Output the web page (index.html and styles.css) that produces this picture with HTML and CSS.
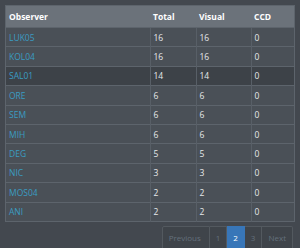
FILE: index.html
```html
<!DOCTYPE html>
<html>
<head>
<meta charset="utf-8">
<link rel="stylesheet" href="styles.css">
</head>
<body>
<div class="wrap">
<table class="obs">
<thead>
<tr><th class="c1">Observer</th><th class="c2">Total</th><th class="c3">Visual</th><th class="c4">CCD</th></tr>
</thead>
<tbody>
<tr><td><a>LUK05</a></td><td>16</td><td>16</td><td>0</td></tr>
<tr><td><a>KOL04</a></td><td>16</td><td>16</td><td>0</td></tr>
<tr class="hover"><td><a>SAL01</a></td><td>14</td><td>14</td><td>0</td></tr>
<tr><td><a>ORE</a></td><td>6</td><td>6</td><td>0</td></tr>
<tr><td><a>SEM</a></td><td>6</td><td>6</td><td>0</td></tr>
<tr><td><a>MIH</a></td><td>6</td><td>6</td><td>0</td></tr>
<tr><td><a>DEG</a></td><td>5</td><td>5</td><td>0</td></tr>
<tr><td><a>NIC</a></td><td>3</td><td>3</td><td>0</td></tr>
<tr><td><a>MOS04</a></td><td>2</td><td>2</td><td>0</td></tr>
<tr><td><a>ANI</a></td><td>2</td><td>2</td><td>0</td></tr>
</tbody>
</table>
<ul class="pager">
<li class="pg prev">Previous</li>
<li class="pg">1</li>
<li class="pg active">2</li>
<li class="pg">3</li>
<li class="pg next">Next</li>
</ul>
</div>
</body>
</html>
```
FILE: styles.css
```css
html, body { margin: 0; padding: 0; background: #43484f; }
body { font-family: "Open Sans", "DejaVu Sans", sans-serif; font-size: 8.5px; color: #e6e8ea; width: 300px; height: 248px; overflow: hidden; }
.wrap { padding: 5px 7px 0 5px; }
.obs { width: 288px; border-collapse: collapse; table-layout: fixed; background: #4a5057; border: 1px solid #5d646c; }
.obs th { background: #6b727a; color: #ffffff; font-weight: 700; text-align: left; height: 21px; padding: 0 3px; border-bottom: 1px solid #5d646c; }
.obs td { height: 18.4px; padding: 0 3px; border-top: 1px solid #5d646c; border-left: 1px solid #585f67; }
.obs td:first-child { border-left: none; }
.obs tr.hover td { background: #3d4248; }
.obs a { color: #3a9cc2; }
.c1 { width: 138px; }
.c2 { width: 40px; }
.c3 { width: 49px; }
.c4 { width: 37px; }
.pager { list-style: none; margin: 4px 0 0 0; padding: 0; display: flex; justify-content: flex-end; }
.pg { height: 22px; line-height: 22px; padding: 0 6px; background: #3f444a; border: 1px solid #53595f; border-left: none; color: #64707c; font-size: 8px; }
.pg.prev { border-left: 1px solid #53595f; border-radius: 2px 0 0 2px; width: 34px; }
.pg.next { border-radius: 0 2px 2px 0; }
.pg.active { background: #3876b8; color: #ffffff; border-color: #3876b8; }
```
